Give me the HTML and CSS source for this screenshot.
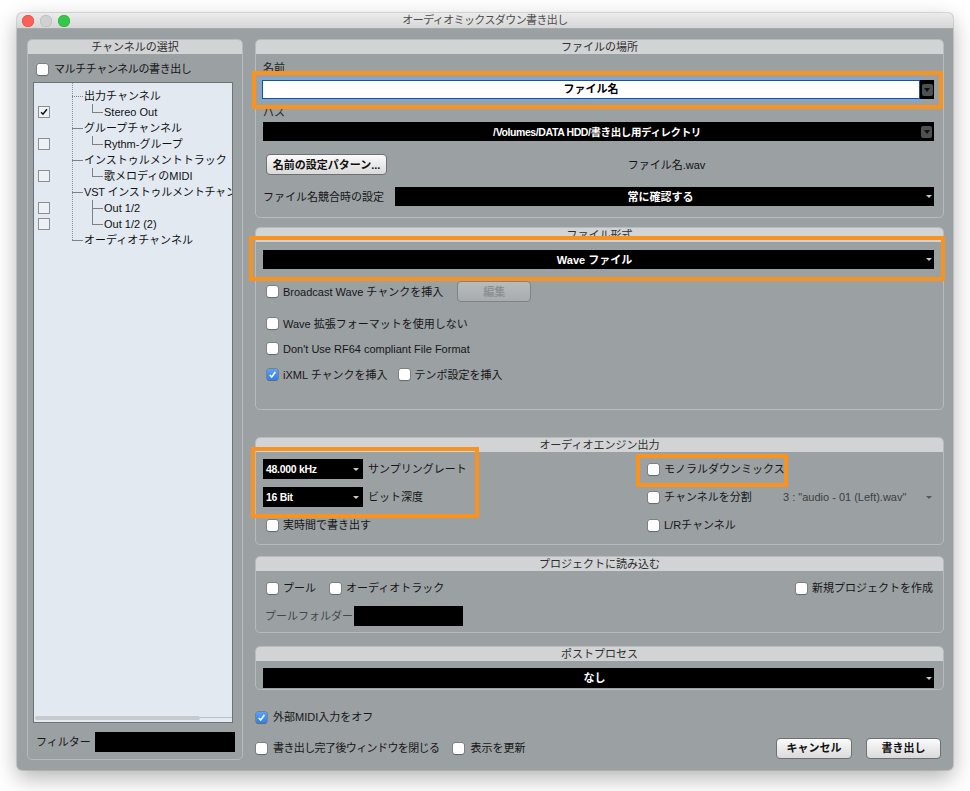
FILE: index.html
```html
<!DOCTYPE html>
<html lang="ja">
<head>
<meta charset="utf-8">
<title>オーディオミックスダウン書き出し</title>
<link rel="stylesheet" href="styles.css">
</head>
<body>
<div class="win">
  <div class="titlebar">
    <div class="lights"><span class="light red"></span><span class="light grey"></span><span class="light green"></span></div>
    <div class="title">オーディオミックスダウン書き出し</div>
    <div></div>
  </div>
  <div class="content">
    <section class="panel left">
      <div class="phead">チャンネルの選択</div>
      <div class="chk multi"><span class="cb"></span><span>マルチチャンネルの書き出し</span></div>
      <div class="tree">
        <div class="rows">
          <div class="tr l1"><span class="tslot"></span><span class="conn dot"></span><span class="tt">出力チャンネル</span></div>
          <div class="tr l2"><span class="tslot tcb"><svg viewBox="0 0 12 12" width="10" height="10"><path d="M2.5 6.2 L4.8 8.6 L9.5 2.6" stroke="#111" stroke-width="1.8" fill="none"/></svg></span><span class="elbow"></span><span class="tt">Stereo Out</span></div>
          <div class="tr l1"><span class="tslot"></span><span class="conn"></span><span class="tt">グループチャンネル</span></div>
          <div class="tr l2"><span class="tslot tcb"></span><span class="elbow"></span><span class="tt">Rythm-グループ</span></div>
          <div class="tr l1"><span class="tslot"></span><span class="conn"></span><span class="tt">インストゥルメントトラック</span></div>
          <div class="tr l2"><span class="tslot tcb"></span><span class="elbow"></span><span class="tt">歌メロディのMIDI</span></div>
          <div class="tr l1"><span class="tslot"></span><span class="conn"></span><span class="tt vst">VST インストゥルメントチャンネル</span></div>
          <div class="tr l2"><span class="tslot tcb"></span><span class="elbow cont"></span><span class="tt">Out 1/2</span></div>
          <div class="tr l2"><span class="tslot tcb"></span><span class="elbow"></span><span class="tt">Out 1/2 (2)</span></div>
          <div class="tr l1"><span class="tslot"></span><span class="conn"></span><span class="tt">オーディオチャンネル</span></div>
        </div>
        <div class="hscroll"><span class="thumb"></span></div>
      </div>
      <div class="filter"><span class="flbl">フィルター</span><span class="fbox"></span></div>
    </section>

    <div class="right">
      <section class="panel p1">
        <div class="phead">ファイルの場所</div>
        <div class="lbl">名前</div>
        <div class="namerow">
          <div class="input">ファイル名</div>
          <div class="ddbtn"><span class="sq"><span class="dtri"></span></span></div>
        </div>
        <div class="lbl lbl2">パス</div>
        <div class="bar path"><span class="bt">/Volumes/DATA HDD/書き出し用ディレクトリ</span><span class="sq"><span class="dtri"></span></span></div>
        <div class="patrow">
          <div class="btn pat">名前の設定パターン...</div>
          <div class="fname">ファイル名.wav</div>
        </div>
        <div class="confrow">
          <span class="conflbl">ファイル名競合時の設定</span>
          <div class="bar conf"><span class="bt">常に確認する</span><span class="tri"></span></div>
        </div>
      </section>

      <section class="panel p2">
        <div class="phead">ファイル形式</div>
        <div class="bar fmt"><span class="bt">Wave ファイル</span><span class="tri"></span></div>
        <div class="crow r1"><div class="chk"><span class="cb"></span><span>Broadcast Wave チャンクを挿入</span></div><div class="btn dis edit">編集</div></div>
        <div class="crow r2"><div class="chk"><span class="cb"></span><span>Wave 拡張フォーマットを使用しない</span></div></div>
        <div class="crow r3"><div class="chk"><span class="cb"></span><span>Don't Use RF64 compliant File Format</span></div></div>
        <div class="crow r4"><div class="chk"><span class="cb on"><svg viewBox="0 0 11 11" width="11" height="11"><path d="M2.8 5.9 L4.7 8 L8.4 3" stroke="#fff" stroke-width="1.5" fill="none"/></svg></span><span>iXML チャンクを挿入</span></div><div class="chk tempo"><span class="cb"></span><span>テンポ設定を挿入</span></div></div>
      </section>

      <section class="panel p3">
        <div class="phead">オーディオエンジン出力</div>
        <div class="eng">
          <div class="erow"><div class="sel"><span>48.000 kHz</span><span class="tri"></span></div><span class="slbl">サンプリングレート</span></div>
          <div class="erow"><div class="chk"><span class="cb"></span><span>モノラルダウンミックス</span></div></div>
          <div class="erow"><div class="sel"><span>16 Bit</span><span class="tri"></span></div><span class="slbl">ビット深度</span></div>
          <div class="erow split"><div class="chk"><span class="cb"></span><span>チャンネルを分割</span></div><span class="splitval">3 : "audio - 01 (Left).wav"</span><span class="tri gtri"></span></div>
          <div class="erow"><div class="chk ind"><span class="cb"></span><span>実時間で書き出す</span></div></div>
          <div class="erow"><div class="chk"><span class="cb"></span><span>L/Rチャンネル</span></div></div>
        </div>
      </section>

      <section class="panel p4">
        <div class="phead">プロジェクトに読み込む</div>
        <div class="prow">
          <div class="chk"><span class="cb"></span><span>プール</span></div>
          <div class="chk atrk"><span class="cb"></span><span>オーディオトラック</span></div>
          <div class="chk newp"><span class="cb"></span><span>新規プロジェクトを作成</span></div>
        </div>
        <div class="prow pool">
          <span class="poollbl">プールフォルダー</span><span class="poolbox"></span>
        </div>
      </section>

      <section class="panel p5">
        <div class="phead">ポストプロセス</div>
        <div class="bar post"><span class="bt">なし</span><span class="tri"></span></div>
      </section>

      <div class="brow b1">
        <div class="chk"><span class="cb on"><svg viewBox="0 0 11 11" width="11" height="11"><path d="M2.8 5.9 L4.7 8 L8.4 3" stroke="#fff" stroke-width="1.5" fill="none"/></svg></span><span>外部MIDI入力をオフ</span></div>
      </div>
      <div class="brow b2">
        <div class="chk"><span class="cb"></span><span class="tight">書き出し完了後ウィンドウを閉じる</span></div>
        <div class="chk upd"><span class="cb"></span><span>表示を更新</span></div>
        <div class="btn cancel">キャンセル</div>
        <div class="btn export">書き出し</div>
      </div>
    </div>
  </div>
  <div class="hl hl1"></div>
  <div class="hl hl2"></div>
  <div class="hl hl3"></div>
  <div class="hl hl4"></div>
</div>
</body>
</html>
```

FILE: styles.css
```css
* { box-sizing: border-box; }
html, body { margin: 0; padding: 0; }
body {
  background: #ffffff;
  width: 970px;
  height: 791px;
  overflow: hidden;
  font-family: "Liberation Sans", "Noto Sans CJK JP", sans-serif;
  font-size: 11px;
  line-height: 14px;
  color: #161616;
}

.win {
  position: relative;
  margin: 13px 0 0 17px;
  width: 936px;
  height: 757px;
  background: #9ba0a3;
  border-radius: 5px;
  box-shadow: 0 8px 22px rgba(0,0,0,0.30), 0 0 0 1px rgba(0,0,0,0.12);
  display: flex;
  flex-direction: column;
}

/* title bar */
.titlebar {
  height: 16px;
  flex: none;
  display: grid;
  grid-template-columns: 1fr auto 1fr;
  align-items: center;
  background: linear-gradient(#ececec, #d6d6d6);
  border-bottom: 1px solid #a6a9ab;
  border-radius: 5px 5px 0 0;
}
.lights { display: flex; gap: 6px; padding-left: 5px; }
.light { width: 12px; height: 12px; border-radius: 50%; }
.light.red { background: #fc5f57; box-shadow: inset 0 0 0 0.5px #de4640; }
.light.grey { background: #d0d0d0; box-shadow: inset 0 0 0 0.5px #b3b3b3; }
.light.green { background: #34c749; box-shadow: inset 0 0 0 0.5px #27a93a; }
.title { color: #4d4d4d; font-size: 11px; letter-spacing: -0.6px; line-height: 15px; }

/* layout */
.content {
  flex: 1;
  display: flex;
  gap: 12px;
  padding: 10px 9px 10px 10px;
  min-height: 0;
}
.panel {
  border: 1px solid #b7bbbe;
  border-radius: 5px;
  display: flex;
  flex-direction: column;
}
.phead {
  height: 14px;
  flex: none;
  background: #d1d3d5;
  border-radius: 4px 4px 0 0;
  text-align: center;
  line-height: 14px;
  color: #2e2e2e;
}

/* checkboxes */
.chk { display: flex; align-items: center; gap: 5px; white-space: nowrap; }
.cb {
  width: 11px; height: 11px; flex: none;
  background: #fff;
  border-radius: 2px;
  box-shadow: 0 0 0 0.5px rgba(0,0,0,0.35), 0 0.5px 1px rgba(0,0,0,0.2);
  display: flex; align-items: center; justify-content: center;
}
.cb.on { background: linear-gradient(#5aa2f7, #2f7fee); }

/* left panel */
.left { width: 216px; flex: none; padding: 0 10px 7px 5px; }
.left .phead { margin: 0 -10px 0 -5px; }
.multi { margin: 8px 0 0 4px; height: 14px; gap: 6px; letter-spacing: -0.4px; }
.tree {
  margin-top: 6px;
  flex: 1;
  width: 200px;
  border: 1px solid #6d7275;
  background:
    repeating-linear-gradient(to bottom, #8c8f93 0 1px, transparent 1px 2px) 38px 0 / 1px 157px no-repeat,
    #e2e9f1;
  display: flex;
  flex-direction: column;
  overflow: hidden;
  padding-top: 5px;
}
.rows { flex: 1; }
.tr { display: flex; align-items: center; height: 16px; white-space: nowrap; color: #111; }
.tslot { width: 12px; height: 12px; flex: none; margin-left: 4px; margin-right: 22px; }
.l2 .tslot { margin-right: 42px; }
.tcb {
  border: 1px solid #8b8f94;
  background: #eef2f6;
  display: flex; align-items: center; justify-content: center;
}
.vst { letter-spacing: -0.2px; }
.conn { width: 11px; flex: none; border-top: 1px solid #7d8084; margin-right: 1px; }
.conn.dot { border-top-style: dotted; }
.elbow {
  width: 11px; height: 16px; flex: none; margin-right: 1px;
  background:
    linear-gradient(#7d8084, #7d8084) 0 0 / 1px 9px no-repeat,
    linear-gradient(#7d8084, #7d8084) 0 8px / 11px 1px no-repeat;
}
.elbow.cont { background-size: 1px 16px, 11px 1px; }
.hscroll {
  height: 6px;
  flex: none;
  margin: 0 0 1px 1px;
  display: flex;
  align-items: center;
  background: linear-gradient(#b9bec4, #b9bec4) 0 2px / 100% 1px no-repeat;
}
.thumb { width: 165px; height: 4px; border-radius: 2px; background: #c6c9cd; }
.filter { margin-top: 9px; height: 20px; display: flex; align-items: center; padding-left: 3px; }
.flbl { white-space: nowrap; flex: none; }
.fbox { width: 140px; height: 20px; background: #000; margin-left: 4px; flex: none; }

/* right column */
.right { flex: 1; display: flex; flex-direction: column; min-width: 0; }
.right .panel { padding: 0 9px 0 7px; flex: none; }
.right .phead { margin: 0 -9px 0 -7px; }
.p1 { height: 179px; }
.p2 { height: 183px; margin-top: 9px; }
.p3 { height: 108px; margin-top: 27px; }
.p4 { height: 77px; margin-top: 11px; }
.p5 { height: 44px; margin-top: 13px; }

.lbl { margin-top: 8px; line-height: 12px; height: 12px; color: #1b1b1b; }
.lbl2 { margin-top: 7px; }
.namerow { margin-top: 6px; height: 19px; display: flex; }
.input {
  flex: 1;
  margin-left: -1px;
  background: #fff;
  border: 1px solid #1e518f;
  box-shadow: 0 0 0 2px #79a8dc;
  text-align: center;
  font-weight: bold;
  line-height: 17px;
  color: #000;
}
.ddbtn { width: 14px; flex: none; background: #000; display: flex; align-items: center; justify-content: center; }
.sq { width: 11px; height: 12px; border-radius: 2px; background: #4e5052; display: flex; align-items: center; justify-content: center; flex: none; }
.dtri { width: 0; height: 0; border-left: 3.5px solid transparent; border-right: 3.5px solid transparent; border-top: 4px solid #111; }

.bar {
  height: 19px;
  background: #000;
  color: #fff;
  font-weight: bold;
  display: flex;
  align-items: center;
  padding-right: 2px;
}
.bt { flex: 1; text-align: center; white-space: nowrap; }
.tri { width: 0; height: 0; flex: none; border-left: 3px solid transparent; border-right: 3px solid transparent; border-top: 3px solid #c9c9c9; }
.path { margin-top: 4px; font-size: 10.5px; letter-spacing: -0.4px; }
.path .bt { padding-left: 10px; }
.patrow { margin-top: 13px; height: 21px; display: flex; align-items: center; }
.btn {
  height: 21px;
  border: 1px solid #6e7174;
  border-radius: 4px;
  background: linear-gradient(#fbfbfb, #dadada);
  font-weight: bold;
  color: #111;
  display: flex; align-items: center; justify-content: center;
  white-space: nowrap;
  flex: none;
}
.pat { width: 121px; margin-left: 3px; }
.fname { flex: 1; text-align: center; padding-left: 12px; color: #111; }
.confrow { margin-top: 12px; height: 19px; display: flex; align-items: center; }
.conflbl { width: 132px; flex: none; white-space: nowrap; }
.conf { flex: 1; }

.fmt { margin-top: 8px; }
.crow { height: 21px; display: flex; align-items: center; padding-left: 4px; }
.r1 { margin-top: 12px; }
.r2 { margin-top: 11px; }
.r3 { margin-top: 4px; }
.r4 { margin-top: 5px; }
.edit { width: 74px; margin-left: 14px; }
.btn.dis { background: linear-gradient(#b8bbbd, #a9acae); border-color: #7f8386; color: #8d9093; }
.tempo { margin-left: 11px; }

.eng { display: grid; grid-template-columns: 385px 1fr; row-gap: 8px; margin-top: 7px; }
.erow { height: 20px; display: flex; align-items: center; }
.sel {
  width: 100px; height: 20px; flex: none;
  background: #000; color: #fff; font-weight: bold; font-size: 10.5px;
  display: flex; align-items: center; justify-content: space-between;
  padding: 0 4px 0 3px;
  letter-spacing: -0.3px;
}
.slbl { margin-left: 5px; }
.ind { margin-left: 4px; }
.split .chk { width: 135px; }
.splitval { color: #3b3e40; white-space: nowrap; }
.gtri { margin-left: auto; margin-right: 2px; border-top-color: #55585a; }

.prow { display: flex; align-items: center; height: 20px; margin-top: 7px; padding-left: 4px; }
.atrk { margin-left: 14px; }
.newp { margin-left: auto; margin-right: 1px; }
.pool { margin-top: 8px; padding-left: 2px; }
.poollbl { color: #45484a; width: 89px; white-space: nowrap; }
.poolbox { width: 109px; height: 20px; background: #000; }

.post { margin-top: 7px; height: 20px; }

.brow { height: 20px; display: flex; align-items: center; padding-left: 1px; }
.brow .chk { gap: 6px; }
.tight { letter-spacing: -0.6px; }
.b1 { margin-top: 17px; }
.b2 { margin-top: 11px; }
.upd { margin-left: 14px; }
.cancel { width: 76px; margin-left: auto; }
.export { width: 75px; margin-left: 14px; margin-right: 3px; }

/* orange annotation boxes over the dialog */
.hl { position: absolute; border: 4px solid #f7931e; pointer-events: none; }
.hl1 { left: 235px; top: 58px; width: 691px; height: 38px; }
.hl2 { left: 232px; top: 223px; width: 696px; height: 45px; }
.hl3 { left: 234px; top: 434px; width: 228px; height: 71px; }
.hl4 { left: 619px; top: 441px; width: 152px; height: 33px; }
```
